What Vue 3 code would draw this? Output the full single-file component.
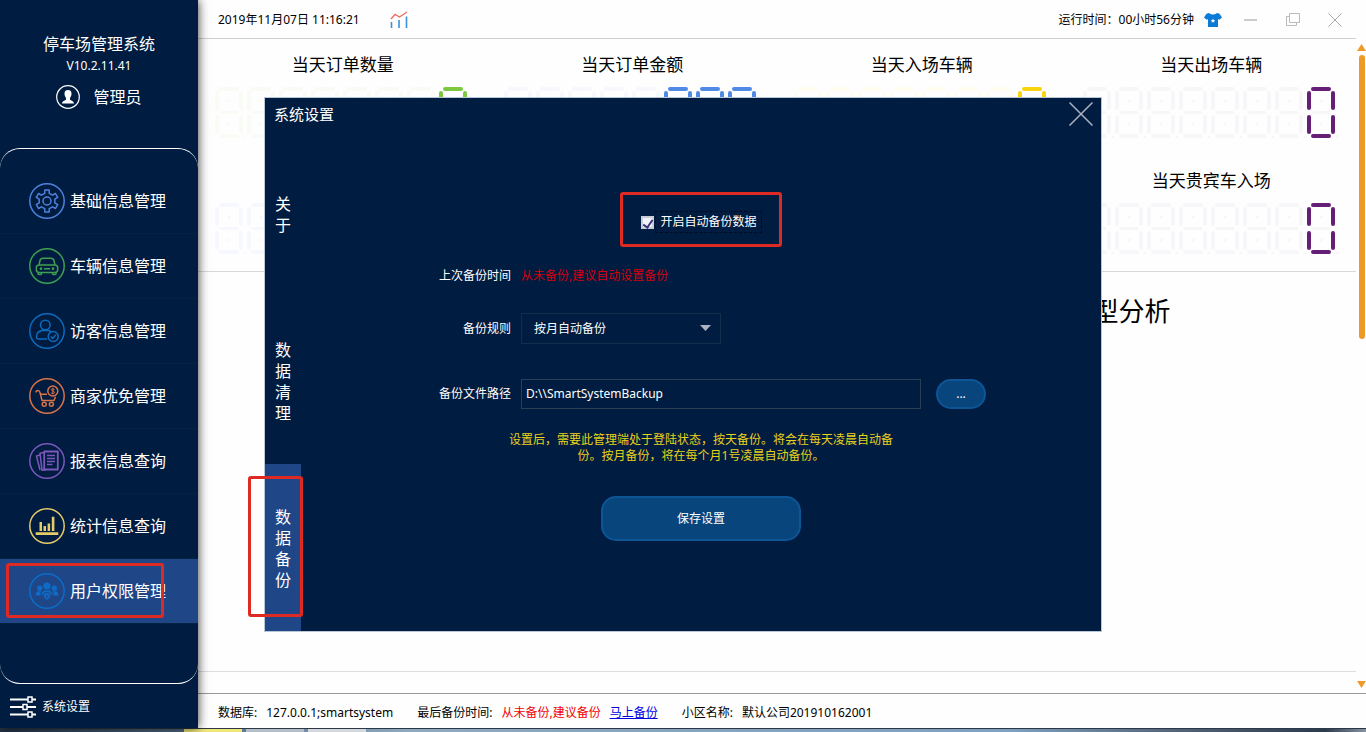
<script setup>
import { ref } from 'vue'

// 左侧菜单
const menus = [
  {
    name: '基础信息管理',
    color: '#4d82dc',
    icon: '<path d="M15.8 10.3V6.9h4.4v3.4l3.4 1.9 2.9-1.7 2.2 3.9-2.9 1.7v3.8l2.9 1.7-2.2 3.9-2.9-1.7-3.4 1.9v3.4h-4.4v-3.4l-3.4-1.9-2.9 1.7-2.2-3.9 2.9-1.7v-3.8l-2.9-1.7 2.2-3.9 2.9 1.7z"/><circle cx="18" cy="18" r="4"/>'
  },
  {
    name: '车辆信息管理',
    color: '#3f9f50',
    icon: '<path d="M10 17l1-4.5q.6-2.3 3-2.3h8q2.4 0 3 2.3l1 4.5"/><rect x="7.3" y="17" width="21.4" height="7.4" rx="3"/><path d="M9 24.4v1.2q0 1 1 1h1.5q1 0 1-1v-1.2M23.5 24.4v1.2q0 1 1 1H26q1 0 1-1v-1.2M15 20.7h6"/><circle cx="12" cy="20.7" r=".6"/><circle cx="24" cy="20.7" r=".6"/>'
  },
  {
    name: '访客信息管理',
    color: '#0b6bbd',
    icon: '<circle cx="16.3" cy="12" r="4.8"/><path d="M18 26H9.5q-2 0-2-2 0-5.500 5.5-6.500h6.5q1.5.3 2.5 1.2"/><circle cx="24.2" cy="23.5" r="5"/><path d="M21.8 23.4l1.9 2 3.2-3.6"/>'
  },
  {
    name: '商家优免管理',
    color: '#d8734a',
    icon: '<path d="M7 14.5q0-2 2-2 1.5 0 2 2l2 8h12l1.5-3.8M11.5 16.2H18"/><circle cx="15.2" cy="26.2" r="2"/><circle cx="22.4" cy="26.2" r="2"/><circle cx="23.8" cy="13" r="5"/><path d="M25.5 11.3q-3.2-1.3-3.2.3c0 1.5 3.2 1.2 3.2 2.8 0 1.5-2 1.3-3.4.5M23.9 9.800v6.6" stroke-width="1"/>'
  },
  {
    name: '报表信息查询',
    color: '#7a57ba',
    icon: '<rect x="15.2" y="8.5" width="13.6" height="18" stroke-width="1.8"/><path d="M15 9.500l-4 .8 2 17 4-.6M11 12l-3.5 1L11 27M18 12.5h8M18 15.5h8M18 18.5h8M18 21.5h5.5"/>'
  },
  {
    name: '统计信息查询',
    color: '#e6cc68',
    icon: '<path d="M6.7 24.3h22.6V27H6.7zM10.5 14H13v9h-2.5zM14.5 18H17v5h-2.500zM18.6 15.5h2.5V23h-2.5zM22.8 8.8h2.6V23h-2.6z" fill="currentColor" stroke="none"/>'
  },
  {
    name: '用户权限管理',
    color: '#0c6cc8',
    active: true,
    icon: '<g fill="currentColor" stroke="none"><circle cx="18" cy="13" r="3.6"/><circle cx="10.7" cy="15.2" r="2.6"/><circle cx="25.3" cy="15.2" r="2.6"/><path d="M12.7 22q0-4.600 3.5-4.600h3.6q3.500 0 3.500 4.600zM6.7 22.5q0-4.300 3-4.300h2.5q-.9 1.6-.8 4.3zM29.3 22.5q0-4.300-3-4.300h-2.5q.9 1.6.8 4.3z"/></g><path d="M18 19.5l3.5 1v3q-.7 2.5-3.5 3.8-2.800-1.300-3.500-3.800v-3z" fill="currentColor" stroke="#1f4788" stroke-width="1"/><path d="M16.5 23h3M18 23v2" stroke="#1f4788" stroke-width="1"/>'
  }
]

// 当天统计，lit 为点亮的位数
const stats = [
  { title: '当天订单数量', lit: 1, color: '#7cc83e', dim: '#f8fcf5' },
  { title: '当天订单金额', lit: 3, color: '#4f8ae6', dim: '#f6f8fe' },
  { title: '当天入场车辆', lit: 1, color: '#f7d40c', dim: '#fffdf1' },
  { title: '当天出场车辆', lit: 1, color: '#651f76', dim: '#f7f6f8' },
  { title: '', lit: 1, color: '#4f8ae6', dim: '#f6f8fe' },
  { title: '', lit: 1, color: '#f7d40c', dim: '#fffdf1' },
  { title: '', lit: 1, color: '#7cc83e', dim: '#f8fcf5' },
  { title: '当天贵宾车入场', lit: 1, color: '#651f76', dim: '#f7f6f8' }
]

// 数码管外圈六段
const ring = 'M6 2h16M2 6v15M26 6v15M2 30v15M26 30v15M6 49h16'
const middle = 'M6 25.5h16M14 14h.1M14 37h.1M30 50h.1'

const tabs = ['关于', '数据清理', '数据备份']
const currentTab = ref('数据备份')

const autoBackup = ref(true)
const rule = ref('month')
const backupPath = ref('D:\\\\SmartSystemBackup')
</script>

<template>
  <div class="screen">
    <div class="app">
      <aside class="sidebar">
        <div class="brand">
          <div class="brand-name">停车场管理系统</div>
          <div class="brand-version">V10.2.11.41</div>
          <div class="user">
            <svg width="24" height="24" viewBox="0 0 24 24">
              <circle cx="12" cy="12" r="11.3" fill="none" stroke="#fff" stroke-width="1.2" />
              <path d="M12 5c2.5 0 3.6 1.6 3.5 4-.1 2-.9 3-1.5 3.900v1.5c.6 1.2 3.8 1.3 4 4H6c.2-2.700 3.400-2.800 4-4v-1.500c-.6-.9-1.400-1.900-1.500-3.900C8.4 6.600 9.500 5 12 5z" fill="#fff" />
            </svg>
            <span>管理员</span>
          </div>
        </div>

        <nav class="menu">
          <a v-for="item in menus" :key="item.name" href="#" class="menu-item" :class="{ active: item.active }">
            <svg class="menu-icon" :style="{ color: item.color }" width="36" height="36" viewBox="0 0 36 36">
              <circle cx="18" cy="18" r="17.200" />
              <g v-html="item.icon"></g>
            </svg>
            <span>{{ item.name }}</span>
            <i v-if="item.active" class="mark"></i>
          </a>
        </nav>

        <a href="#" class="setting">
          <svg width="26" height="22" viewBox="0 0 26 22" stroke="#fff" stroke-width="1.5" fill="#001c40">
            <path d="M0 3.5h26M0 11h26M0 18.5h26" stroke-width="2" />
            <rect x="18" y="1" width="4" height="5" />
            <rect x="13" y="8.5" width="4" height="5" />
            <rect x="18" y="16" width="4" height="5" />
          </svg>
          <span>系统设置</span>
        </a>
      </aside>

      <main class="main">
        <header class="topbar">
          <span>2019年11月07日 11:16:21</span>
          <svg class="chart-icon" width="18" height="18" viewBox="0 0 18 18" fill="none">
            <path d="M1 8l4-4.5L9.500 6 17 1" stroke="#ee6f66" stroke-width="1.4" />
            <path d="M1.500 11v6M9 9v8M16.500 5.500V17" stroke="#3d8fd8" stroke-width="1.6" />
          </svg>
          <span class="uptime">运行时间：00小时56分钟</span>
          <button class="icon-btn" aria-label="换肤">
            <svg width="18" height="14" viewBox="0 0 18 14">
              <path d="M5 0q4 3 8 0l2.500.7L18 4.500l-2.600 2.300L14 6v8H4V6l-1.400.8L0 4.500 2.500.7z" fill="#0b7bd6" />
              <path d="M9 5.500l.7 1.400 1.500.2-1.100 1 .3 1.500L9 8.900l-1.400.7.300-1.500-1.100-1 1.500-.2z" fill="#fff" />
            </svg>
          </button>
          <div class="win-btns">
            <button class="icon-btn" aria-label="最小化">
              <svg width="14" height="14" viewBox="0 0 14 14"><path d="M0 7h13" stroke="#bbb" stroke-width="1.5" /></svg>
            </button>
            <button class="icon-btn" aria-label="最大化">
              <svg width="14" height="14" viewBox="0 0 14 14" fill="none" stroke="#bbb"><path d="M3.500.5h10v9h-10zM3 3.500H.5v9h10V10" /></svg>
            </button>
            <button class="icon-btn" aria-label="关闭">
              <svg width="14" height="14" viewBox="0 0 14 14"><path d="M.5.5l13 13M13.500.5l-13 13" stroke="#aaa" /></svg>
            </button>
          </div>
        </header>

        <div class="scroll-area">
          <div class="content">
            <section class="stats">
              <div v-for="(s, i) in stats" :key="i" class="stat">
                <div class="stat-title">{{ s.title }}</div>
                <div class="digits">
                  <svg v-for="n in 8" :key="n" width="32" height="51" viewBox="0 0 32 51">
                    <path :d="middle" :stroke="s.dim" stroke-width="3" />
                    <path :d="ring" :stroke="n > 8 - s.lit ? s.color : s.dim" stroke-width="4" />
                  </svg>
                </div>
              </div>
            </section>
            <section class="charts">
              <h2>当天车辆类型分析</h2>
            </section>
          </div>
          <div class="scrollbar">
            <svg width="9" height="7" viewBox="0 0 9 7"><path d="M4.500 0L9 7H0z" fill="#ef9a26" /></svg>
            <div class="track"><div class="thumb"></div></div>
            <svg width="9" height="7" viewBox="0 0 9 7"><path d="M0 0h9L4.500 7z" fill="#ef9a26" /></svg>
          </div>
        </div>

        <footer class="statusbar">
          <span class="group">数据库:<span>127.0.0.1;smartsystem</span></span>
          <span class="group">最后备份时间:<span class="warn">从未备份,建议备份</span><a href="#">马上备份</a></span>
          <span class="group">小区名称:<span>默认公司201910162001</span></span>
        </footer>
      </main>

      <!-- 系统设置弹窗 -->
      <div class="dialog" role="dialog" aria-label="系统设置">
        <div class="dialog-head">
          <span>系统设置</span>
          <button class="icon-btn" aria-label="关闭设置">
            <svg width="24" height="24" viewBox="0 0 24 24"><path d="M.5.5l23 23M23.500.5l-23 23" stroke="#a9b3c1" stroke-width="1.5" /></svg>
          </button>
        </div>
        <div class="dialog-body">
          <div class="tabs">
            <button v-for="t in tabs" :key="t" class="tab" :class="{ active: t === currentTab }" @click="currentTab = t">
              <span>{{ t }}</span>
              <i v-if="t === currentTab" class="mark"></i>
            </button>
          </div>

          <form class="form" @submit.prevent>
            <label class="auto">
              <input v-model="autoBackup" type="checkbox" />
              <span>开启自动备份数据</span>
            </label>
            <div class="row last-time">
              <span class="label">上次备份时间</span>
              <span class="never">从未备份,建议自动设置备份</span>
            </div>
            <div class="row">
              <label class="label" for="rule">备份规则</label>
              <div class="select">
                <select id="rule" v-model="rule">
                  <option value="day">按天自动备份</option>
                  <option value="month">按月自动备份</option>
                </select>
                <svg width="11" height="6" viewBox="0 0 11 6"><path d="M0 0h11L5.500 6z" fill="#a9b3c1" /></svg>
              </div>
            </div>
            <div class="row path">
              <label class="label" for="path">备份文件路径</label>
              <input id="path" v-model="backupPath" type="text" />
              <button type="button" class="browse">...</button>
            </div>
            <p class="tip">设置后，需要此管理端处于登陆状态，按天备份。将会在每天凌晨自动备份。按月备份，将在每个月1号凌晨自动备份。</p>
            <button type="submit" class="save">保存设置</button>
          </form>
        </div>
      </div>
    </div>

    <div class="taskbar">
      <i class="task yellow"></i>
      <i class="task"></i>
      <i class="task light"></i>
    </div>
  </div>
</template>

<style>
body {
  margin: 0;
  overflow: hidden;
}
</style>

<style scoped>
.screen {
  height: 100vh;
  display: flex;
  flex-direction: column;
  font-family: 'Noto Sans', 'Noto Sans CJK SC', sans-serif;
  font-size: 12px;
  line-height: 16px;
  color: #000;
}
.screen * {
  box-sizing: border-box;
}
button,
input,
select {
  font: inherit;
  color: inherit;
  margin: 0;
}
.app {
  flex: 1;
  display: flex;
  min-height: 0;
  position: relative;
}

/* 侧边栏 */
.sidebar {
  width: 198px;
  flex-shrink: 0;
  display: flex;
  flex-direction: column;
  background: #001c40;
  color: #fff;
  box-shadow: 0 0 10px rgba(0, 0, 0, 0.8);
  z-index: 1;
}
.brand {
  height: 148px;
  padding-top: 34px;
  text-align: center;
}
.brand-name {
  font-size: 16px;
  line-height: 20px;
}
.brand-version {
  margin-top: 4px;
}
.user {
  display: flex;
  justify-content: center;
  align-items: center;
  gap: 13px;
  margin-top: 11px;
  font-size: 16px;
  line-height: 24px;
}
.menu {
  flex: 1;
  padding-top: 20px;
  border-top: 1px solid #fff;
  border-bottom: 1px solid #fff;
  border-radius: 20px;
}
.menu-item {
  position: relative;
  display: flex;
  align-items: center;
  gap: 5px;
  height: 65px;
  padding-left: 29px;
  border-bottom: 1px solid #062241;
  color: #fff;
  font-size: 16px;
  text-decoration: none;
}
.menu-item.active {
  background: #1f4788;
}
.menu-icon {
  fill: none;
  stroke: currentColor;
  stroke-width: 1.5;
  stroke-linejoin: round;
}
.mark {
  position: absolute;
  border: 3px solid #df2a24;
  border-radius: 3px;
}
.menu-item .mark {
  left: 6px;
  top: 4px;
  width: 158px;
  height: 55px;
}
.setting {
  display: flex;
  align-items: center;
  gap: 6px;
  height: 44px;
  padding: 2px 0 0 10px;
  color: #fff;
  text-decoration: none;
}

/* 主区域 */
.main {
  flex: 1;
  min-width: 0;
  display: flex;
  flex-direction: column;
  background: #fefefe;
}
.topbar {
  display: flex;
  align-items: center;
  height: 39px;
  margin-right: 10px;
  padding: 2px 14px 0 20px;
  border-bottom: 1px solid #d0d0d0;
}
.chart-icon {
  margin-left: 30px;
}
.uptime {
  margin-left: auto;
  margin-right: 10px;
}
.icon-btn {
  display: flex;
  padding: 0;
  border: 0;
  background: none;
}
.win-btns {
  display: flex;
  gap: 28px;
  margin-left: 22px;
}
.scroll-area {
  flex: 1;
  display: flex;
  min-height: 0;
}
.content {
  flex: 1;
  display: flex;
  flex-direction: column;
  margin-bottom: 21px;
  border-bottom: 1px solid #ddd;
}
.stats {
  display: grid;
  grid-template-columns: repeat(4, 1fr);
  border-bottom: 1px solid #d8d8d8;
}
.stat {
  height: 116px;
  padding-top: 14px;
}
.stat-title {
  height: 24px;
  font-size: 17px;
  line-height: 24px;
  text-align: center;
}
.digits {
  display: flex;
  justify-content: center;
  margin-top: 10px;
}
.digits path {
  fill: none;
  stroke-linecap: round;
}
.charts {
  display: grid;
  grid-template-columns: 1fr 1fr;
}
.charts h2 {
  grid-column: 2;
  margin: 21px 0 0;
  font-size: 26px;
  font-weight: 400;
  line-height: 36px;
  text-align: center;
}
.scrollbar {
  width: 10px;
  display: flex;
  flex-direction: column;
  align-items: center;
  padding: 5px 0 5px 1px;
}
.track {
  flex: 1;
  padding: 4px 0;
}
.thumb {
  width: 6px;
  height: 284px;
  border-radius: 3px;
  background: #ef9a26;
}
.statusbar {
  display: flex;
  align-items: center;
  gap: 24px;
  height: 35px;
  padding: 4px 20px 0;
  border-top: 1px solid #999;
}
.group {
  display: flex;
  gap: 9px;
}
.warn {
  color: #f00000;
}
.statusbar a {
  color: #0000e0;
}

/* 弹窗 */
.dialog {
  position: absolute;
  top: 97px;
  left: 264px;
  right: 264px;
  z-index: 2;
  background: #001c40;
  border: 1px solid #b9c6d6;
  color: #fff;
}
.dialog-head {
  display: flex;
  justify-content: space-between;
  align-items: center;
  height: 32px;
  padding: 0 8px 0 9px;
  font-size: 15px;
}
.dialog-body {
  display: flex;
}
.tabs {
  width: 36px;
}
.tab {
  position: relative;
  display: flex;
  align-items: center;
  width: 36px;
  height: 167px;
  padding: 2px 9px 0 10px;
  border: 0;
  background: none;
  font-size: 16px;
  line-height: 21px;
}
.tab span {
  width: 16px;
  word-break: break-all;
}
.tab.active {
  background: #1f4788;
}
.tab .mark {
  left: -17px;
  top: 12px;
  width: 55px;
  height: 141px;
}
.form {
  flex: 1;
  display: flex;
  flex-direction: column;
  align-items: center;
  padding-top: 62px;
}
.auto {
  display: flex;
  align-items: center;
  height: 55px;
  padding: 5px 17px 0 18px;
  border: 3px solid #df2a24;
  border-radius: 3px;
}
.auto input {
  appearance: none;
  display: flex;
  justify-content: center;
  width: 13px;
  height: 13px;
  margin-right: 1px;
  border: 2px solid #c9cdd6;
  background: #f1f3f8;
}
.auto input:checked::after {
  content: '';
  width: 4px;
  height: 8px;
  border: solid #38317f;
  border-width: 0 2px 2px 0;
  transform: rotate(35deg);
}
.auto span {
  padding: 2px 4px;
  border: 1px dashed #000d22;
}
.row {
  align-self: stretch;
  display: flex;
  align-items: center;
}
.label {
  width: 210px;
  margin-right: 10px;
  text-align: right;
}
.last-time {
  height: 30px;
  margin: 14px 0 22px;
}
.never {
  color: #d4000c;
}
.select {
  position: relative;
  width: 200px;
}
.select select {
  appearance: none;
  width: 100%;
  height: 31px;
  padding: 0 12px;
  border: 1px solid #132d4b;
  border-radius: 0;
  background: transparent;
}
.select svg {
  position: absolute;
  right: 10px;
  top: 12px;
  pointer-events: none;
}
.path {
  margin-top: 35px;
}
.path input {
  width: 400px;
  height: 30px;
  padding: 0 4px 2px;
  border: 1px solid #2a3e54;
  background: transparent;
}
.browse,
.save {
  border: 2px solid #0e5596;
  background: #08457c;
}
.browse {
  width: 50px;
  height: 30px;
  margin-left: 15px;
  padding: 0;
  border-radius: 15px;
}
.tip {
  width: 392px;
  margin: 23px 0 32px;
  color: #e8d21c;
  text-align: center;
}
.save {
  width: 200px;
  height: 45px;
  border-radius: 15px;
}

/* 任务栏 */
.taskbar {
  display: flex;
  gap: 4px;
  height: 4px;
  padding-left: 184px;
  border-top: 1px solid #2c3848;
  background: linear-gradient(90deg, #23344a 0%, #4d6580 12%, #8fa9c0 30%, #7fa0bf 74%, #56697f 85%, #2c3a4d 97%, #8793a0 100%);
}
.task {
  width: 58px;
  background: #b5bfca;
}
.task.yellow {
  background: #f0e77a;
}
.task.light {
  background: #d5d9de;
}
</style>
